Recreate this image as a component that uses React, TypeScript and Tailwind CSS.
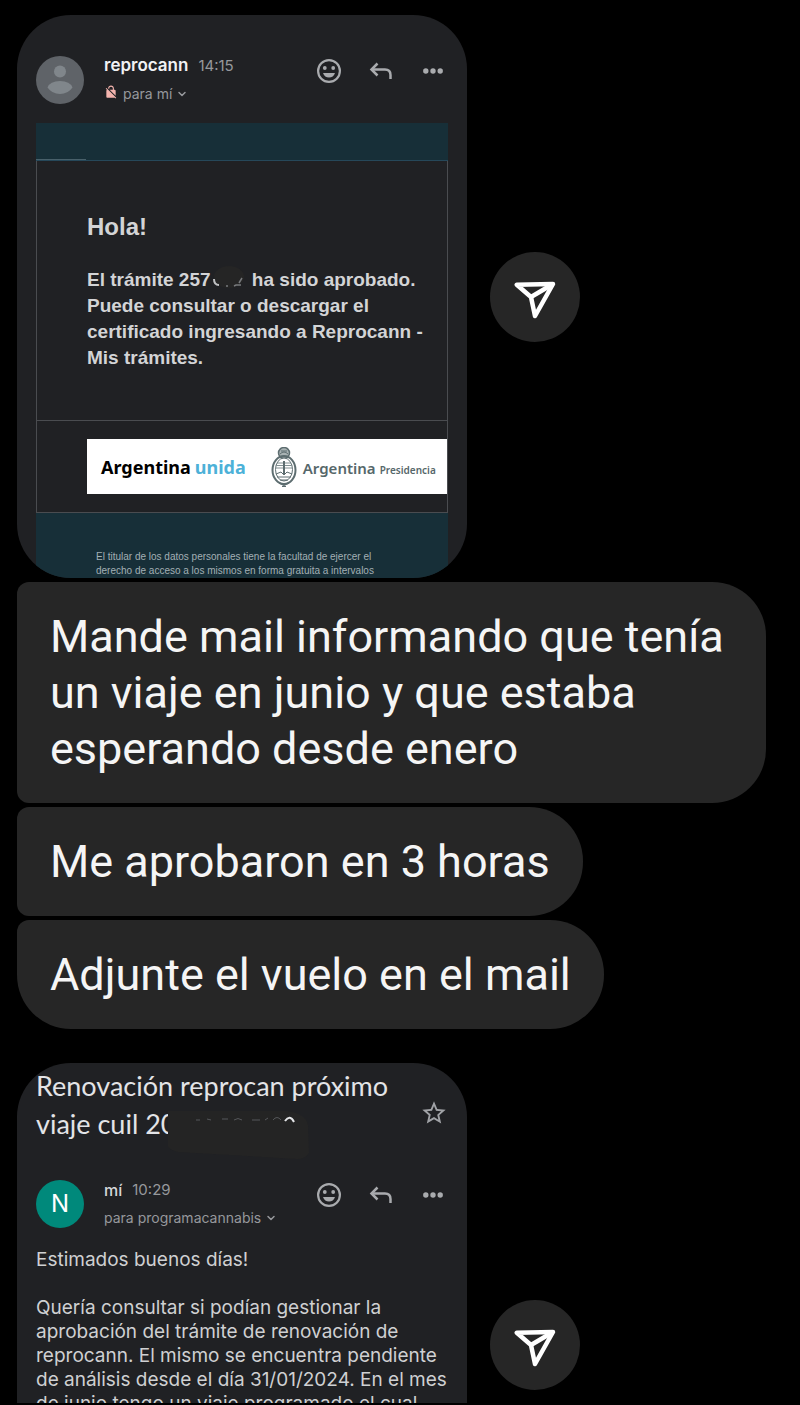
import type { ReactNode } from "react";
import { ChevronDown } from "lucide-react";
import { MdNoEncryption, MdStarBorder } from "react-icons/md";

function SmileIcon() {
  return (
    <svg viewBox="0 0 24 24" className="w-6 h-6" fill="none" stroke="currentColor" strokeWidth="2.200">
      <circle cx="12" cy="12" r="10.900" />
      <circle cx="7.800" cy="9" r="1.900" fill="currentColor" stroke="none" />
      <circle cx="16.200" cy="9" r="1.900" fill="currentColor" stroke="none" />
      <path d="M6 14h12c-1 3-3.200 4.600-6 4.600S7 17 6 14z" fill="currentColor" stroke="none" />
    </svg>
  );
}

function ReplyIcon() {
  return (
    <svg viewBox="0 0 24 24" className="w-6 h-6" fill="none" stroke="currentColor" strokeWidth="2.500">
      <path d="M8.500 4.500L2.500 10.500l6 6" />
      <path d="M2.500 10.500h13.500q5.500 0 5.500 5.500V20" />
    </svg>
  );
}

function DotsIcon() {
  return (
    <svg viewBox="0 0 24 24" className="w-6 h-6" fill="currentColor">
      <circle cx="4.800" cy="12" r="2.700" />
      <circle cx="12" cy="12" r="2.700" />
      <circle cx="19.200" cy="12" r="2.700" />
    </svg>
  );
}

function SendIcon() {
  return (
    <svg viewBox="0 0 44 44" className="w-11 h-11" fill="none" stroke="currentColor" strokeWidth="4.500" strokeLinejoin="round">
      <path d="M3.800 9.800L40 9 22 41 18 22z" />
      <path d="M18 22L40 9" />
    </svg>
  );
}

function CoatOfArms() {
  return (
    <svg viewBox="0 0 26 40" className="w-[26px] h-10" fill="none" stroke="#5d6d70">
      <circle cx="13" cy="6" r="5.500" fill="#a9b3b4" strokeWidth="1.500" />
      <path d="M9 7q4-4 8 0M10 4h6" />
      <ellipse cx="13" cy="23" rx="11.500" ry="14" strokeWidth="2" />
      <ellipse cx="13" cy="22.500" rx="8.500" ry="11.500" fill="#fff" />
      <path d="M6 16h14M5 18.500h16M4.500 21h17" stroke="#829092" />
      <path d="M13 14v14" strokeWidth="2" />
      <path d="M5 27l5-2 3 3 3-3 5 2M6 30h14M9 33h8" />
      <path d="M8 36l5 2 5-2M11 39.500h4" strokeWidth="1.500" />
    </svg>
  );
}

function MailActions() {
  return (
    <div className="ml-auto mr-[3px] mt-1 flex items-center gap-7 text-[#a9abae]">
      <button type="button" aria-label="Reaccionar">
        <SmileIcon />
      </button>
      <button type="button" aria-label="Responder">
        <ReplyIcon />
      </button>
      <button type="button" aria-label="Más opciones">
        <DotsIcon />
      </button>
    </div>
  );
}

interface MailHeaderProps {
  avatar: ReactNode;
  name: string;
  bold?: boolean;
  time: string;
  to: string;
  unencrypted?: boolean;
}

function MailHeader({ avatar, name, bold, time, to, unencrypted }: MailHeaderProps) {
  return (
    <div className="flex items-start gap-5">
      {avatar}
      <div className="pt-px font-['Inter',sans-serif]">
        <div className="flex items-center gap-[10px] h-5">
          <span className={bold ? "text-[17px] font-semibold text-[#f1f2f4]" : "text-base font-medium text-[#d5d7da]"}>
            {name}
          </span>
          <span className="text-[15px] text-[#96989c]">{time}</span>
        </div>
        <button type="button" className="mt-2 h-5 flex items-center gap-1 text-sm text-[#96989c]">
          {unencrypted && <MdNoEncryption className="w-[14px] h-[14px] mr-px mb-1 text-[#f4b4ae]" />}
          {to}
          <ChevronDown className="w-3 h-3" strokeWidth={3} />
        </button>
      </div>
      <MailActions />
    </div>
  );
}

function Attachment({ children }: { children: ReactNode }) {
  return (
    <div className="flex items-center gap-[23px]">
      <div className="w-full max-w-[450px] aspect-[450/563] overflow-hidden rounded-[54px] bg-[#202124] px-[19px]">
        {children}
      </div>
      <button
        type="button"
        aria-label="Reenviar"
        className="w-[90px] h-[90px] shrink-0 rounded-full bg-[#262626] text-white flex items-center justify-center"
      >
        <SendIcon />
      </button>
    </div>
  );
}

function ApprovalMail() {
  return (
    <Attachment>
      <div className="pt-10 pb-[19px]">
        <MailHeader
          bold
          unencrypted
          name="reprocann"
          time="14:15"
          to="para mí"
          avatar={
            <svg viewBox="0 0 48 48" className="w-12 h-12 shrink-0 mt-px">
              <circle cx="24" cy="24" r="24" fill="#5f6368" />
              <circle cx="24" cy="15.500" r="6" fill="#80868b" />
              <path d="M11.500 31.500Q14 25 24 25t12.500 6.500Q32 38 24 38t-12.500-6.500z" fill="#80868b" />
            </svg>
          }
        />
      </div>
      <div className="bg-[#172f38] font-['Liberation_Sans',sans-serif]">
        <div className="h-[38px] border-b border-[#26485a]">
          <div className="w-[50px] h-full border-b border-[#48606a]" />
        </div>
        <div className="bg-[#202124] border-x border-b border-[#4a4c50] pl-[50px] pt-[50px] pb-[49px] text-[#d3d4d6] font-bold">
          <h2 className="text-2xl leading-8">Hola!</h2>
          <p className="mt-6 text-[19px] leading-[26px] whitespace-nowrap">
            El trámite 257
            <span className="relative inline-block w-9 h-4">
              <svg viewBox="0 0 34 24" className="absolute left-0 -bottom-1 w-[34px] h-6" fill="none">
                <ellipse cx="18" cy="11" rx="15" ry="11" fill="#252525" />
                <path d="M3 13Q3 19 8 19" stroke="#bfc0c2" strokeWidth="2" />
                <path d="M15 20h2M23 20l2-1h5M31 12l-3 5" stroke="#77797c" strokeWidth="1.500" />
              </svg>
            </span>{" "}
            ha sido aprobado.
            <br />
            Puede consultar o descargar el
            <br />
            certificado ingresando a Reprocann -
            <br />
            Mis trámites.
          </p>
        </div>
        <div className="bg-[#202124] border-x border-b border-[#4a4c50] pl-[50px] py-[18px]">
          <div className="bg-white h-[55px] pl-[14px] flex items-center whitespace-nowrap font-['Noto_Sans',sans-serif]">
            <span className="text-lg font-bold text-black">Argentina</span>
            <span className="ml-1 text-lg font-bold text-[#4db1d8]">unida</span>
            <span className="ml-[25px]">
              <CoatOfArms />
            </span>
            <span className="ml-[6px] pt-1 flex items-baseline gap-1 font-semibold text-[#56676a]">
              <span className="text-[15px]">Argentina</span>
              <span className="text-[10px]">Presidencia</span>
            </span>
          </div>
        </div>
        <p className="pl-[60px] pt-[37px] pb-10 text-[10px] leading-[14px] text-[#a3b0b5] whitespace-nowrap">
          El titular de los datos personales tiene la facultad de ejercer el
          <br />
          derecho de acceso a los mismos en forma gratuita a intervalos
        </p>
      </div>
    </Attachment>
  );
}

function RequestMail() {
  return (
    <Attachment>
      <div className="flex items-center justify-between pt-1 text-[#e3e4e7]">
        <h2 className="font-['Lato',sans-serif] text-[27px] leading-[38px] whitespace-nowrap">
          Renovación reprocan próximo
          <br />
          viaje cuil 2
          <span className="relative inline-block">
            0
            <svg viewBox="0 0 150 56" className="absolute left-[7px] top-0 w-[150px] h-[56px]" fill="none">
              <path d="M0 6L120 6q18 3 20 14l1 28q-4 6-12 6L10 47Q-5 43 0 34z" fill="#242424" />
              <path d="M28 15h4M39 14l4 1M54 14h6M66 15q4-3 8 0M84 15h8M97 15l3-2M105 15q4-5 8 0" stroke="#55575a" />
              <path d="M117 16q5-7 9 1" stroke="#e3e4e7" strokeWidth="2" />
            </svg>
          </span>
        </h2>
        <button type="button" aria-label="Destacar" className="mt-4 text-[#a0a2a6]">
          <MdStarBorder className="w-7 h-7" />
        </button>
      </div>
      <div className="pt-9">
        <MailHeader
          name="mí"
          time="10:29"
          to="para programacannabis"
          avatar={
            <div className="w-12 h-12 shrink-0 mt-px rounded-full bg-[#00897b] flex items-center justify-center font-['Inter',sans-serif] text-2xl text-white">
              N
            </div>
          }
        />
      </div>
      <div className="mt-5 font-['Inter',sans-serif] text-[19px] leading-6 text-[#cfd0d2] whitespace-nowrap">
        <p>Estimados buenos días!</p>
        <p className="mt-6">
          Quería consultar si podían gestionar la
          <br />
          aprobación del trámite de renovación de
          <br />
          reprocann. El mismo se encuentra pendiente
          <br />
          de análisis desde el día 31/01/2024. En el mes
          <br />
          de junio tengo un viaje programado el cual
        </p>
      </div>
    </Attachment>
  );
}

function Bubble({ last, children }: { last?: boolean; children: ReactNode }) {
  return (
    <p
      className={
        last
          ? "w-fit max-w-[749px] bg-[#262626] px-[33px] pt-[27px] pb-[26px] rounded-[54px] rounded-tl-xl"
          : "w-fit max-w-[749px] bg-[#262626] px-[33px] pt-[27px] pb-[26px] rounded-r-[54px] rounded-l-xl"
      }
    >
      {children}
    </p>
  );
}

function App() {
  return (
    <main className="h-screen overflow-hidden bg-black border-b-2 border-black px-[17px] pt-[15px]">
      <ApprovalMail />
      <div className="mt-1 mb-[34px] flex flex-col gap-1 font-['Roboto',sans-serif] text-[45px] leading-[56px] text-[#f5f5f5]">
        <Bubble>Mande mail informando que tenía un viaje en junio y que estaba esperando desde enero</Bubble>
        <Bubble>Me aprobaron en 3 horas</Bubble>
        <Bubble last>Adjunte el vuelo en el mail</Bubble>
      </div>
      <RequestMail />
    </main>
  );
}

export default App;
